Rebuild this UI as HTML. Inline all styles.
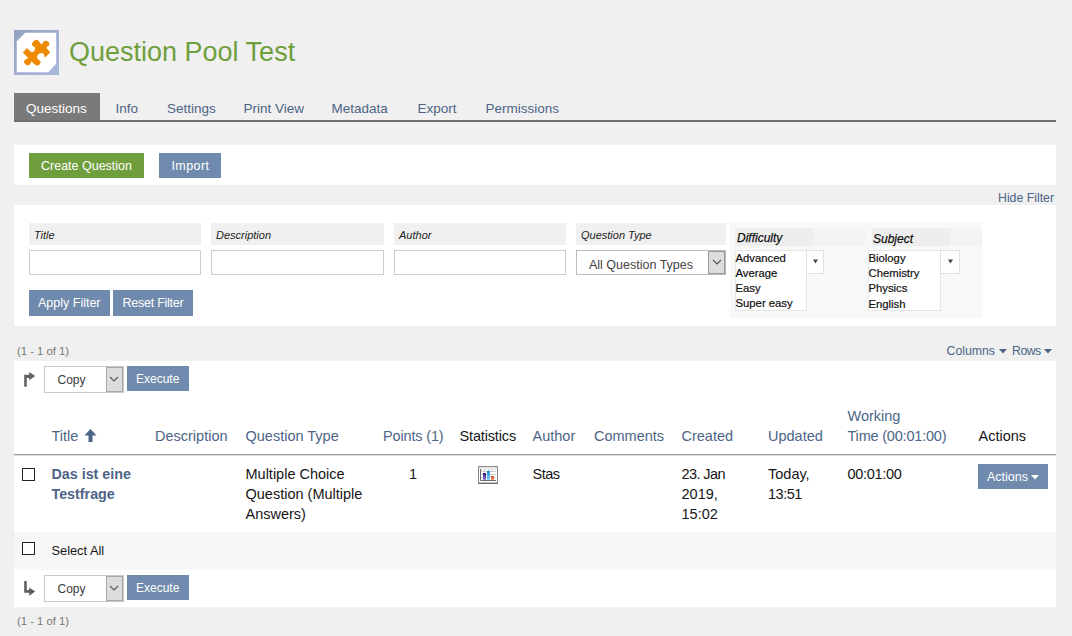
<!DOCTYPE html>
<html><head><meta charset="utf-8"><title>Question Pool Test</title>
<style>
html,body{margin:0;padding:0;}
body{width:1072px;height:636px;background:#f0f0f0;position:relative;overflow:hidden;font-family:"Liberation Sans",sans-serif;}
.t{position:absolute;line-height:1;white-space:nowrap;}
.r{position:absolute;}
</style></head><body>
<svg class="r" style="left:14px;top:30px" width="45" height="45" viewBox="0 0 45 45">
<defs><linearGradient id="gb" x1="0" y1="0" x2="1" y2="1"><stop offset="0" stop-color="#93a3c0"/><stop offset="1" stop-color="#aab9db"/></linearGradient></defs>
<rect x="0" y="0" width="45" height="45" fill="url(#gb)"/>
<path d="M11.2 2.8 H42.2 V33.8 L34.2 42.2 H2.8 V11.2 Z" fill="#fff"/>
<path fill="#ee8a00" d="M18.08 15.56 C18.08 15.23 17.66 14.39 18.08 13.55 C18.50 12.71 19.84 11.16 20.59 10.53 C21.34 9.90 21.93 9.69 22.60 9.77 C23.27 9.85 23.78 10.19 24.62 11.03 C25.46 11.87 27.14 14.18 27.64 14.81 C27.98 14.26 28.90 12.20 29.65 11.53 C30.40 10.86 31.32 10.70 32.16 10.78 C33.00 10.86 34.13 11.45 34.68 12.04 C35.23 12.63 35.51 13.63 35.43 14.30 C35.35 14.97 34.73 15.51 34.18 16.06 C33.63 16.60 32.50 17.32 32.16 17.57 L36.19 22.60 L30.65 27.64 C30.48 27.05 30.24 24.86 29.65 24.11 C29.06 23.36 28.05 23.02 27.13 23.11 C26.21 23.20 24.78 23.95 24.11 24.62 C23.44 25.29 23.11 26.38 23.11 27.13 C23.11 27.88 23.61 28.55 24.11 29.14 C24.61 29.73 25.79 30.40 26.13 30.65 C26.21 30.90 26.80 31.49 26.63 32.16 C26.46 32.83 25.79 34.13 25.12 34.68 C24.45 35.23 23.44 35.60 22.60 35.43 C21.76 35.26 20.93 34.38 20.09 33.67 C19.25 32.96 17.99 31.58 17.57 31.16 C17.32 31.66 16.81 33.51 16.06 34.18 C15.30 34.85 13.96 35.35 13.04 35.18 C12.12 35.01 10.99 33.93 10.53 33.17 C10.07 32.41 10.03 31.32 10.28 30.65 C10.53 29.98 11.41 29.64 12.04 29.14 C12.67 28.64 13.71 27.89 14.05 27.64 L8.77 22.60 L13.04 18.08 C13.38 18.41 14.30 19.42 15.06 20.09 C15.82 20.76 16.73 21.93 17.57 22.10 C18.41 22.27 19.50 21.69 20.09 21.10 C20.68 20.51 21.09 19.33 21.09 18.58 C21.09 17.82 20.59 17.07 20.09 16.57 C19.59 16.07 18.41 15.73 18.08 15.56 Z"/>
</svg>
<div class="t" style="left:69px;top:38.54px;font-size:27px;color:#6f9f3c;">Question Pool Test</div>
<div class="r" style="left:14px;top:93px;width:86px;height:27px;background:#7a7a7a;"></div>
<div class="r" style="left:14px;top:120px;width:1042px;height:2px;background:#6e6e6e;"></div>
<div class="t" style="left:26px;top:101.57px;font-size:13.5px;color:#fff;">Questions</div>
<div class="t" style="left:115.5px;top:101.57px;font-size:13.5px;color:#4c6586;">Info</div>
<div class="t" style="left:167px;top:101.57px;font-size:13.5px;color:#4c6586;">Settings</div>
<div class="t" style="left:243.5px;top:101.57px;font-size:13.5px;color:#4c6586;">Print View</div>
<div class="t" style="left:331.5px;top:101.57px;font-size:13.5px;color:#4c6586;">Metadata</div>
<div class="t" style="left:417.5px;top:101.57px;font-size:13.5px;color:#4c6586;">Export</div>
<div class="t" style="left:485.5px;top:101.57px;font-size:13.5px;color:#4c6586;">Permissions</div>
<div class="r" style="left:14px;top:145px;width:1042px;height:40px;background:#fff;"></div>
<div class="r" style="left:29px;top:153px;width:115px;height:25px;background:#6f9f3c;"></div>
<div class="t" style="left:41px;top:159.92px;font-size:12.5px;color:#fff;">Create Question</div>
<div class="r" style="left:159px;top:153px;width:62px;height:25px;background:#6f8aad;"></div>
<div class="t" style="left:171.5px;top:159.92px;font-size:12.5px;color:#fff;letter-spacing:0.4px;">Import</div>
<div class="t" style="left:998px;top:191.59px;font-size:12.3px;color:#4c6586;">Hide Filter</div>
<div class="r" style="left:14px;top:205px;width:1042px;height:121px;background:#fff;"></div>
<div class="r" style="left:29px;top:223px;width:172px;height:22px;background:#f0f0f0;"></div>
<div class="t" style="left:34px;top:229.69px;font-size:11px;color:#222;font-style:italic;">Title</div>
<div class="r" style="left:29px;top:250px;width:172px;height:25px;background:#fff;box-sizing:border-box;border:1px solid #ccc;"></div>
<div class="r" style="left:211px;top:223px;width:173px;height:22px;background:#f0f0f0;"></div>
<div class="t" style="left:216px;top:229.69px;font-size:11px;color:#222;font-style:italic;">Description</div>
<div class="r" style="left:211px;top:250px;width:173px;height:25px;background:#fff;box-sizing:border-box;border:1px solid #ccc;"></div>
<div class="r" style="left:394px;top:223px;width:172px;height:22px;background:#f0f0f0;"></div>
<div class="t" style="left:399px;top:229.69px;font-size:11px;color:#222;font-style:italic;">Author</div>
<div class="r" style="left:394px;top:250px;width:172px;height:25px;background:#fff;box-sizing:border-box;border:1px solid #ccc;"></div>
<div class="r" style="left:576px;top:223px;width:150px;height:22px;background:#f0f0f0;"></div>
<div class="t" style="left:581px;top:229.69px;font-size:11px;color:#222;font-style:italic;">Question Type</div>
<div class="r" style="left:576px;top:250px;width:150px;height:25px;background:#fff;box-sizing:border-box;border:1px solid #bbb;"></div>
<div class="t" style="left:589px;top:258.72px;font-size:12.5px;color:#444;">All Question Types</div>
<div class="r" style="left:708px;top:251px;width:17px;height:23px;background:#ddd;box-sizing:border-box;border:1px solid #999;"></div>
<svg class="r" style="left:712px;top:258px" width="10" height="8" viewBox="0 0 10 8"><path d="M1 2 L5 6 L9 2" fill="none" stroke="#555" stroke-width="1.1"/></svg>
<div class="r" style="left:730px;top:222px;width:252px;height:96px;background:#f8f8f8;"></div>
<div class="r" style="left:735px;top:228px;width:130px;height:18px;background:#f3f3f3;"></div>
<div class="r" style="left:735px;top:228px;width:78px;height:18px;background:#eeeeee;"></div>
<div class="t" style="left:737px;top:232.34px;font-size:12px;color:#111;font-style:italic;-webkit-text-stroke:0.25px #111;">Difficulty</div>
<div class="r" style="left:735px;top:250px;width:72px;height:61px;background:#fff;box-sizing:border-box;border:1px solid #e6e6e6;"></div>
<div class="r" style="left:806px;top:250px;width:18px;height:24px;background:#fff;box-sizing:border-box;border:1px solid #e0e0e0;"></div>
<svg class="r" style="left:813px;top:259px" width="5" height="5" viewBox="0 0 5 5"><path d="M0 0.5 H5 L2.5 4.5 Z" fill="#444"/></svg>
<div class="t" style="left:735.5px;top:252.73px;font-size:11.3px;color:#111;-webkit-text-stroke:0.2px #111;">Advanced</div>
<div class="t" style="left:735.5px;top:267.83px;font-size:11.3px;color:#111;-webkit-text-stroke:0.2px #111;">Average</div>
<div class="t" style="left:735.5px;top:282.93px;font-size:11.3px;color:#111;-webkit-text-stroke:0.2px #111;">Easy</div>
<div class="t" style="left:735.5px;top:298.03px;font-size:11.3px;color:#111;-webkit-text-stroke:0.2px #111;">Super easy</div>
<div class="r" style="left:872px;top:228px;width:110px;height:18px;background:#f3f3f3;"></div>
<div class="r" style="left:872px;top:228px;width:78px;height:18px;background:#eeeeee;"></div>
<div class="t" style="left:873px;top:232.84px;font-size:12px;color:#111;font-style:italic;-webkit-text-stroke:0.25px #111;">Subject</div>
<div class="r" style="left:868px;top:250px;width:73px;height:61px;background:#fff;box-sizing:border-box;border:1px solid #e6e6e6;"></div>
<div class="r" style="left:940px;top:250px;width:20px;height:24px;background:#fff;box-sizing:border-box;border:1px solid #e0e0e0;"></div>
<svg class="r" style="left:948px;top:259px" width="5" height="5" viewBox="0 0 5 5"><path d="M0 0.5 H5 L2.5 4.5 Z" fill="#444"/></svg>
<div class="t" style="left:868.5px;top:253.23px;font-size:11.3px;color:#111;-webkit-text-stroke:0.2px #111;">Biology</div>
<div class="t" style="left:868.5px;top:268.33px;font-size:11.3px;color:#111;-webkit-text-stroke:0.2px #111;">Chemistry</div>
<div class="t" style="left:868.5px;top:283.43px;font-size:11.3px;color:#111;-webkit-text-stroke:0.2px #111;">Physics</div>
<div class="t" style="left:868.5px;top:298.53px;font-size:11.3px;color:#111;-webkit-text-stroke:0.2px #111;">English</div>
<div class="r" style="left:29px;top:290px;width:81px;height:26px;background:#6f8aad;"></div>
<div class="t" style="left:38px;top:297.12px;font-size:12.5px;color:#fff;">Apply Filter</div>
<div class="r" style="left:113px;top:290px;width:80px;height:26px;background:#6f8aad;"></div>
<div class="t" style="left:122.5px;top:297.12px;font-size:12.5px;color:#fff;letter-spacing:-0.25px;">Reset Filter</div>
<div class="t" style="left:17px;top:346.03px;font-size:11.3px;color:#777;">(1 - 1 of 1)</div>
<div class="t" style="left:946.5px;top:344.59px;font-size:12.3px;color:#4c6586;">Columns</div>
<svg class="r" style="left:999px;top:349px" width="8" height="5" viewBox="0 0 8 5"><path d="M0 0 H8 L4 4.5 Z" fill="#4c6586"/></svg>
<div class="t" style="left:1012px;top:344.59px;font-size:12.3px;color:#4c6586;letter-spacing:-0.5px;">Rows</div>
<svg class="r" style="left:1044px;top:349px" width="8" height="5" viewBox="0 0 8 5"><path d="M0 0 H8 L4 4.5 Z" fill="#4c6586"/></svg>
<div class="r" style="left:14px;top:361px;width:1042px;height:246px;background:#fff;"></div>
<div class="r" style="left:44px;top:366px;width:80px;height:27px;background:#fff;box-sizing:border-box;border:1px solid #c8c8c8;"></div>
<div class="r" style="left:106px;top:367px;width:17px;height:25px;background:#ddd;box-sizing:border-box;border:1px solid #a8a8a8;"></div>
<svg class="r" style="left:109px;top:375px" width="10" height="8" viewBox="0 0 10 8"><path d="M1 2 L5 6 L9 2" fill="none" stroke="#555" stroke-width="1.1"/></svg>
<div class="t" style="left:57.5px;top:374.44px;font-size:12px;color:#3a3a3a;">Copy</div>
<div class="r" style="left:127px;top:366px;width:62px;height:25px;background:#6f8aad;"></div>
<div class="t" style="left:136px;top:373.34px;font-size:12px;color:#fff;">Execute</div>
<svg class="r" style="left:23px;top:372px" width="13" height="16" viewBox="0 0 13 16"><path d="M1.2 14.7 V2.8 H6.2 V0 L12.2 4.1 L6.2 8.2 V6 H3.8 V14.7 Z" fill="#636363"/></svg>
<div class="t" style="left:51.5px;top:428.72px;font-size:14.5px;color:#4c6586;">Title</div>
<div class="t" style="left:155px;top:428.72px;font-size:14.5px;color:#4c6586;">Description</div>
<div class="t" style="left:245.5px;top:428.72px;font-size:14.5px;color:#4c6586;">Question Type</div>
<div class="t" style="left:383px;top:428.72px;font-size:14.5px;color:#4c6586;letter-spacing:-0.15px;">Points (1)</div>
<div class="t" style="left:459.5px;top:428.72px;font-size:14.5px;color:#161616;letter-spacing:-0.15px;">Statistics</div>
<div class="t" style="left:532.5px;top:428.72px;font-size:14.5px;color:#4c6586;">Author</div>
<div class="t" style="left:594px;top:428.72px;font-size:14.5px;color:#4c6586;">Comments</div>
<div class="t" style="left:681.5px;top:428.72px;font-size:14.5px;color:#4c6586;">Created</div>
<div class="t" style="left:768px;top:428.72px;font-size:14.5px;color:#4c6586;">Updated</div>
<div class="t" style="left:847.5px;top:428.72px;font-size:14.5px;color:#4c6586;letter-spacing:-0.2px;">Time (00:01:00)</div>
<div class="t" style="left:978.5px;top:428.72px;font-size:14.5px;color:#161616;">Actions</div>
<div class="t" style="left:847.5px;top:408.72px;font-size:14.5px;color:#4c6586;">Working</div>
<svg class="r" style="left:84px;top:429px" width="13" height="13" viewBox="0 0 13 13"><path d="M6.5 0 L12.5 6.5 H8.5 V13 H4.5 V6.5 H0.5 Z" fill="#4c6586"/></svg>
<div class="r" style="left:14px;top:454px;width:1042px;height:1px;background:#a0a0a0;"></div>
<div class="r" style="left:14px;top:455px;width:1042px;height:1px;background:#d8d8d8;"></div>
<div class="r" style="left:22px;top:468px;width:13px;height:13px;background:#fff;box-sizing:border-box;border:1.5px solid #222;border-radius:0.5px;"></div>
<div class="t" style="left:51.5px;top:467.29px;font-size:14.3px;color:#4c6586;font-weight:bold;">Das ist eine</div>
<div class="t" style="left:51.5px;top:487.29px;font-size:14.3px;color:#4c6586;font-weight:bold;">Testfrage</div>
<div class="t" style="left:245.5px;top:466.92px;font-size:14.5px;color:#161616;">Multiple Choice</div>
<div class="t" style="left:245.5px;top:486.92px;font-size:14.5px;color:#161616;">Question (Multiple</div>
<div class="t" style="left:245.5px;top:506.92px;font-size:14.5px;color:#161616;">Answers)</div>
<div class="t" style="left:409px;top:466.92px;font-size:14.5px;color:#161616;">1</div>
<svg class="r" style="left:478px;top:466px" width="20" height="18" viewBox="0 0 20 18">
<defs><linearGradient id="g1" x1="0" y1="0" x2="0" y2="1"><stop offset="0" stop-color="#dcdcdc"/><stop offset="0.3" stop-color="#fff"/></linearGradient>
<linearGradient id="p1" x1="0" y1="0" x2="0" y2="1"><stop offset="0" stop-color="#2a0c80"/><stop offset="1" stop-color="#9a8cd0"/></linearGradient>
<linearGradient id="c1" x1="0" y1="0" x2="0" y2="1"><stop offset="0" stop-color="#0a8ed8"/><stop offset="1" stop-color="#8fd6f5"/></linearGradient>
<linearGradient id="o1" x1="0" y1="0" x2="0" y2="1"><stop offset="0" stop-color="#c8501a"/><stop offset="1" stop-color="#eea070"/></linearGradient></defs>
<rect x="0.5" y="0.5" width="19" height="17" fill="url(#g1)" stroke="#8a8a8a"/>
<path d="M0 17.2 H20" stroke="#6a6a6a" stroke-width="1.2"/>
<path d="M3 5.5 H18 M3 8.5 H18 M3 11.5 H18" stroke="#d0d0d0" stroke-width="1"/>
<path d="M6.5 3 V5 M10.5 3 V5 M14.5 3 V5" stroke="#d0d0d0" stroke-width="1"/>
<path d="M2.5 3 V14.5 H18" fill="none" stroke="#6a6a6a" stroke-width="1"/>
<rect x="5" y="7" width="3" height="7" fill="url(#p1)"/>
<rect x="9" y="5" width="3" height="9" fill="url(#c1)"/>
<rect x="13" y="10" width="3" height="4" fill="url(#o1)"/>
</svg>
<div class="t" style="left:532.5px;top:466.92px;font-size:14.5px;color:#161616;letter-spacing:-0.5px;">Stas</div>
<div class="t" style="left:681.5px;top:466.92px;font-size:14.5px;color:#161616;letter-spacing:-0.6px;">23. Jan</div>
<div class="t" style="left:681.5px;top:486.92px;font-size:14.5px;color:#161616;">2019,</div>
<div class="t" style="left:681.5px;top:506.92px;font-size:14.5px;color:#161616;">15:02</div>
<div class="t" style="left:768px;top:466.92px;font-size:14.5px;color:#161616;">Today,</div>
<div class="t" style="left:768px;top:486.92px;font-size:14.5px;color:#161616;letter-spacing:-0.5px;">13:51</div>
<div class="t" style="left:847.5px;top:466.92px;font-size:14.5px;color:#161616;letter-spacing:-0.3px;">00:01:00</div>
<div class="r" style="left:978px;top:464px;width:70px;height:25px;background:#6f8aad;"></div>
<div class="t" style="left:987px;top:470.92px;font-size:12.5px;color:#fff;">Actions</div>
<svg class="r" style="left:1031px;top:475px" width="8" height="5" viewBox="0 0 8 5"><path d="M0 0 H8 L4 4.5 Z" fill="#fff"/></svg>
<div class="r" style="left:14px;top:532px;width:1042px;height:38px;background:#f7f7f7;"></div>
<div class="r" style="left:22px;top:542px;width:13px;height:13px;background:#fff;box-sizing:border-box;border:1.5px solid #222;border-radius:0.5px;"></div>
<div class="t" style="left:51.5px;top:544.66px;font-size:12.8px;color:#161616;">Select All</div>
<div class="r" style="left:44px;top:575px;width:80px;height:27px;background:#fff;box-sizing:border-box;border:1px solid #c8c8c8;"></div>
<div class="r" style="left:106px;top:576px;width:17px;height:25px;background:#ddd;box-sizing:border-box;border:1px solid #a8a8a8;"></div>
<svg class="r" style="left:109px;top:584px" width="10" height="8" viewBox="0 0 10 8"><path d="M1 2 L5 6 L9 2" fill="none" stroke="#555" stroke-width="1.1"/></svg>
<div class="t" style="left:57.5px;top:583.44px;font-size:12px;color:#3a3a3a;">Copy</div>
<div class="r" style="left:127px;top:575px;width:62px;height:25px;background:#6f8aad;"></div>
<div class="t" style="left:136px;top:582.34px;font-size:12px;color:#fff;">Execute</div>
<svg class="r" style="left:23px;top:580px" width="13" height="16" viewBox="0 0 13 16"><path d="M1.2 0.9 V12.8 H6.2 V15.7 L12.2 11.5 L6.2 7.5 V10 H3.8 V0.9 Z" fill="#5f5f5f"/></svg>
<div class="t" style="left:17px;top:615.53px;font-size:11.3px;color:#777;">(1 - 1 of 1)</div>
</body></html>
